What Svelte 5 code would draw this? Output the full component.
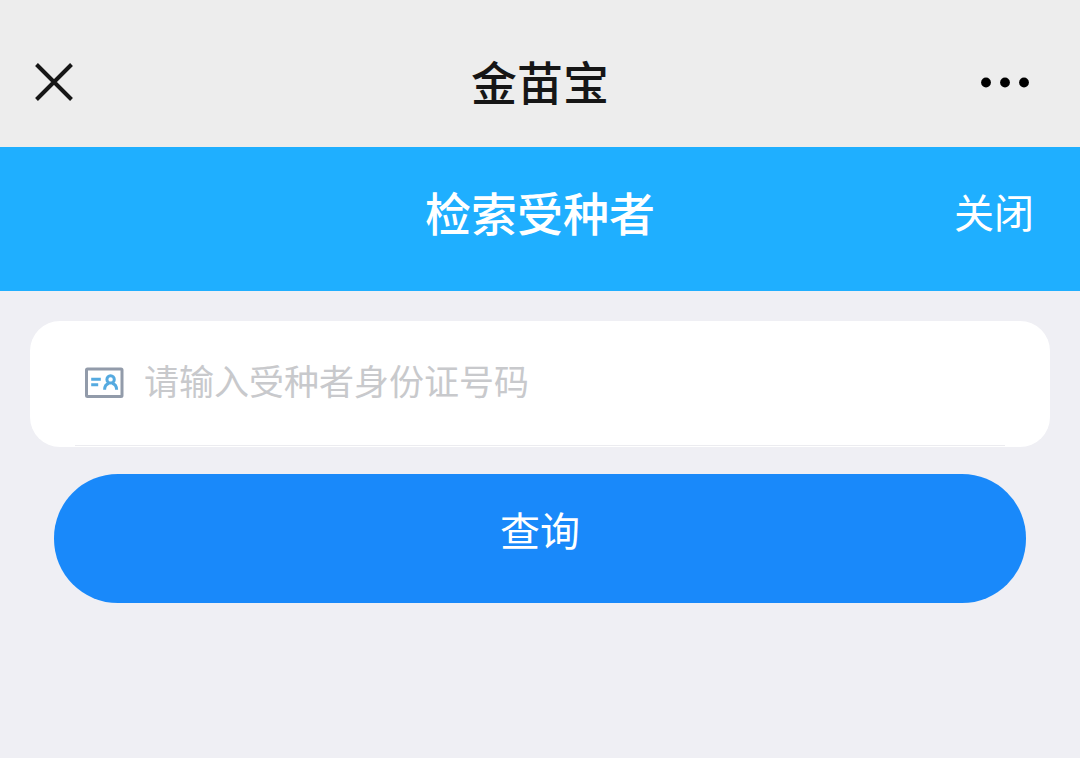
<script>
  let idNumber = $state('')
  let closed = $state(false)

  const search = event => {
    event.preventDefault()
    idNumber = idNumber.trim()
  }

  const closeSearch = () => {
    closed = true
  }
</script>

<svelte:head>
  <title>金苗宝</title>
</svelte:head>

<header class="app-bar">
  <button class="icon-btn" type="button" aria-label="返回">
    <svg width="40" height="40" viewBox="0 0 40 40" fill="none" stroke="#161616" stroke-width="4">
      <path d="M2.5 2.5 37.5 37.5M37.5 2.5 2.5 37.5" />
    </svg>
  </button>
  <h1>金苗宝</h1>
  <button class="icon-btn more" type="button" aria-label="更多">
    <svg width="50" height="12" viewBox="0 0 50 12" fill="#000">
      <circle cx="6" cy="6.5" r="4.9" />
      <circle cx="25" cy="6.5" r="4.9" />
      <circle cx="44" cy="6.5" r="4.9" />
    </svg>
  </button>
</header>

<nav class="title-bar">
  <h2>检索受种者</h2>
  <button class="close-btn" type="button" onclick={closeSearch}>关闭</button>
</nav>

{#if !closed}
  <form onsubmit={search}>
    <div class="card">
      <div class="field">
        <label for="id-number" aria-label="受种者身份证号码">
          <svg width="40" height="32" viewBox="0 0 40 32" fill="none">
            <rect x="2.5" y="2" width="35.5" height="27.5" rx="1" stroke="#929baa" stroke-width="3" />
            <g stroke="#55aae0" stroke-width="3">
              <path d="M7.2 12.2h9.6M7.2 17.8h7" />
              <circle cx="26.6" cy="12.4" r="3.7" />
              <path d="M20.6 22.8c0-3.2 1.8-5.8 4.4-6.6M28.2 16.2c2.6.8 4.4 3.4 4.4 6.6" />
            </g>
          </svg>
        </label>
        <input id="id-number" type="text" placeholder="请输入受种者身份证号码" bind:value={idNumber}>
      </div>
    </div>
    <button class="search-btn" type="submit">查询</button>
  </form>
{/if}

<style>
  :global(body) {
    background-color: #efeff4;
    font-family: 'Noto Sans CJK SC', sans-serif;
  }
  h1, h2 {
    margin: 0;
    font-size: 46px;
    line-height: 68px;
    font-weight: 500;
    text-align: center;
  }
  button {
    padding: 0;
    border: none;
    background: none;
    font-family: inherit;
    cursor: pointer;
  }
  .app-bar, .title-bar {
    display: grid;
    grid-template-columns: 1fr auto 1fr;
    align-items: center;
    box-sizing: border-box;
  }
  .app-bar {
    padding: 48px 50px 31px 34px;
    background-color: #ededed;
    color: #161616;
  }
  .app-bar h1 {
    grid-column: 2;
    padding: 0 0 4px 16px;
    line-height: 64px;
  }
  .icon-btn {
    display: flex;
    justify-self: start;
  }
  .icon-btn.more {
    justify-self: end;
  }
  .title-bar {
    padding: 30px 46px 46px;
    background-color: #1fafff;
    color: #ffffff;
  }
  .title-bar h2 {
    grid-column: 2;
  }
  .close-btn {
    justify-self: end;
    color: #ffffff;
    font-size: 40px;
    line-height: 60px;
  }
  form {
    padding: 30px;
  }
  .card {
    padding: 0 45px 1px;
    border-radius: 30px;
    background-color: #ffffff;
  }
  .field {
    display: flex;
    align-items: center;
    gap: 20px;
    height: 124px;
    padding-left: 9px;
    border-bottom: 1px solid #ececf0;
  }
  .field label {
    display: flex;
  }
  input {
    flex: 1;
    min-width: 0;
    padding: 0 0 6px;
    border: none;
    outline: none;
    background: none;
    color: #333333;
    font-family: inherit;
    font-size: 35px;
    line-height: 52px;
  }
  input::placeholder {
    color: #c8c9cc;
    opacity: 1;
  }
  .search-btn {
    display: block;
    width: calc(100% - 48px);
    margin: 27px 24px 0;
    padding: 25px 0 44px;
    border-radius: 64px;
    background-color: #1989fa;
    color: #ffffff;
    font-size: 40px;
    line-height: 60px;
  }
</style>
